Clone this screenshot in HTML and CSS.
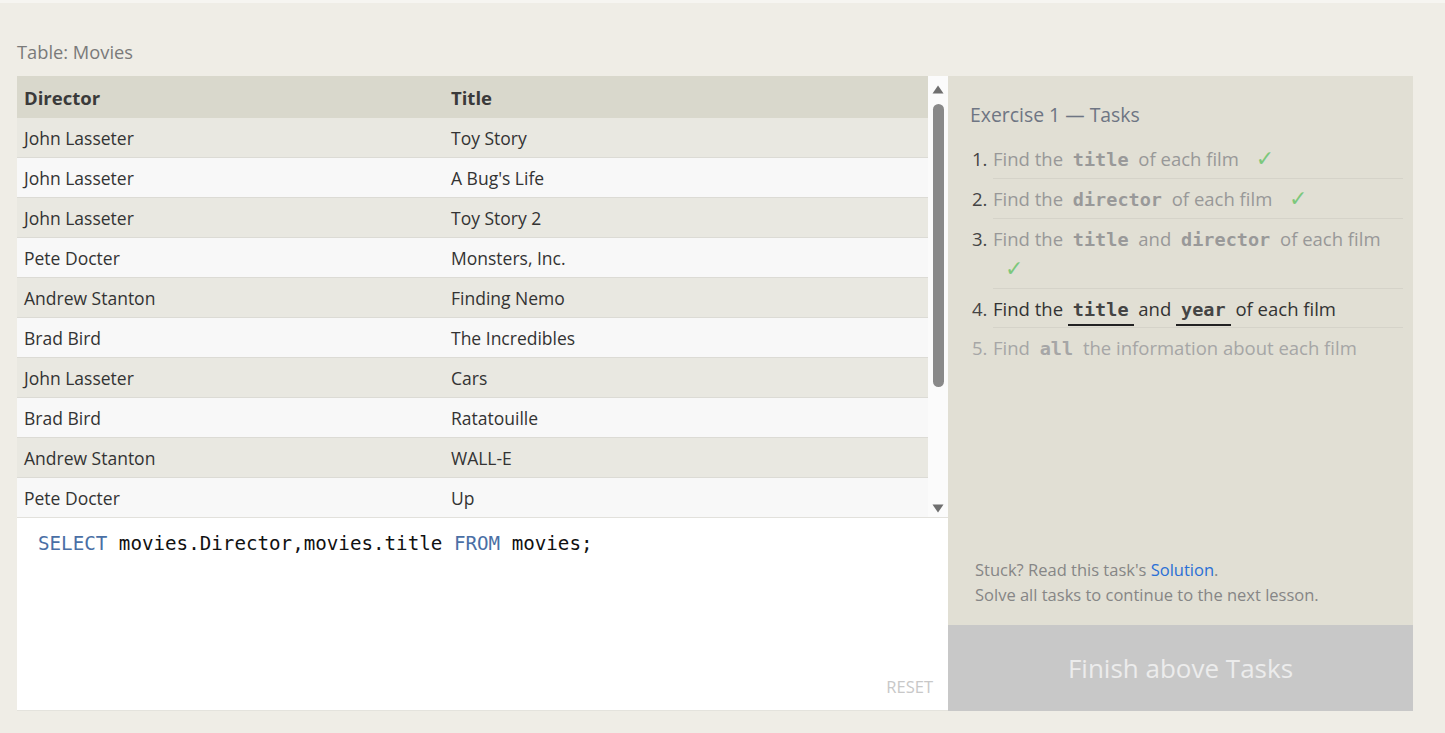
FILE: index.html
```html
<!DOCTYPE html>
<html>
<head>
<meta charset="utf-8">
<link rel="stylesheet" href="styles.css">
</head>
<body>
<div class="topstrip"></div>
<div class="page">
  <div class="table-label">Table: Movies</div>
  <div class="workspace">
    <div class="left">
      <div class="table-area">
        <div class="table">
          <div class="row head"><div class="c1">Director</div><div class="c2">Title</div></div>
          <div class="row odd"><div class="c1">John Lasseter</div><div class="c2">Toy Story</div></div>
          <div class="row even"><div class="c1">John Lasseter</div><div class="c2">A Bug's Life</div></div>
          <div class="row odd"><div class="c1">John Lasseter</div><div class="c2">Toy Story 2</div></div>
          <div class="row even"><div class="c1">Pete Docter</div><div class="c2">Monsters, Inc.</div></div>
          <div class="row odd"><div class="c1">Andrew Stanton</div><div class="c2">Finding Nemo</div></div>
          <div class="row even"><div class="c1">Brad Bird</div><div class="c2">The Incredibles</div></div>
          <div class="row odd"><div class="c1">John Lasseter</div><div class="c2">Cars</div></div>
          <div class="row even"><div class="c1">Brad Bird</div><div class="c2">Ratatouille</div></div>
          <div class="row odd"><div class="c1">Andrew Stanton</div><div class="c2">WALL-E</div></div>
          <div class="row even"><div class="c1">Pete Docter</div><div class="c2">Up</div></div>
        </div>
        <div class="scrollbar">
          <svg class="arrow" width="12" height="10" viewBox="0 0 12 10"><path d="M0.5 9.5 L6 1.5 L11.5 9.5 Z" fill="#6f6f6f"/></svg>
          <div class="thumb-track"><div class="thumb"></div></div>
          <svg class="arrow" width="12" height="10" viewBox="0 0 12 10"><path d="M0.5 1.5 L6 9.5 L11.5 1.5 Z" fill="#6f6f6f"/></svg>
        </div>
      </div>
      <div class="editor">
        <div class="code"><span class="kw">SELECT</span> movies.Director,movies.title <span class="kw">FROM</span> movies;</div>
        <div class="reset">RESET</div>
      </div>
    </div>
    <div class="right">
      <div class="tasks">
        <div class="tasks-title">Exercise 1 — Tasks</div>
        <ol class="task-list">
          <li class="done"><span class="num">1.</span><span class="txt">Find the <code>title</code> of each film <span class="check">✓</span></span></li>
          <li class="done"><span class="num">2.</span><span class="txt">Find the <code>director</code> of each film <span class="check">✓</span></span></li>
          <li class="done"><span class="num">3.</span><span class="txt">Find the <code>title</code> and <code>director</code> of each film <span class="check">✓</span></span></li>
          <li class="active"><span class="num">4.</span><span class="txt">Find the <code>title</code> and <code>year</code> of each film</span></li>
          <li class="todo"><span class="num">5.</span><span class="txt">Find <code>all</code> the information about each film</span></li>
        </ol>
        <div class="stuck">
          <div>Stuck? Read this task's <a href="#">Solution</a>.</div>
          <div>Solve all tasks to continue to the next lesson.</div>
        </div>
      </div>
      <div class="finish">Finish above Tasks</div>
    </div>
  </div>
</div>
</body>
</html>
```

FILE: styles.css
```css
* { box-sizing: border-box; }
html, body { margin: 0; padding: 0; }
body {
  background: #efede6;
  font-family: "Open Sans", "Noto Sans", sans-serif;
  width: 1445px;
  height: 733px;
  overflow: hidden;
}
.topstrip { height: 3px; background: #f6f5f1; }
.page { padding: 37px 0 0 17px; }
.table-label {
  font-size: 18.3px;
  line-height: 24px;
  color: #7a7a7a;
  height: 36px;
}
.workspace { display: flex; width: 1396px; height: 635px; }
.left { width: 931px; display: flex; flex-direction: column; background: #fff; border-bottom: 1px solid #e4e3dd; }
.table-area { height: 441px; display: flex; overflow: hidden; }
.table { width: 911px; }
.row { display: flex; height: 40px; border-bottom: 1px solid #dcdbd5; align-items: center; font-size: 17.5px; color: #333; }
.row.head { height: 42px; background: #d9d8cc; font-weight: 700; font-size: 18.5px; border-bottom: none; color: #3a3a3a; }
.row.odd { background: #e9e8e1; }
.row.even { background: #f8f8f8; }
.c1 { width: 427px; padding-left: 7px; }
.c2 { flex: 1; padding-left: 7px; }
.scrollbar { width: 20px; background: #fbfbfb; display: flex; flex-direction: column; align-items: center; padding: 8px 0 4px; }
.arrow { display: block; }
.thumb-track { flex: 1; padding: 10px 0; width: 100%; display: flex; justify-content: center; }
.thumb { width: 11px; height: 283px; background: #898989; border-radius: 6px; }
.editor {
  flex: 1;
  border-top: 1px solid #e2e1dc;
  display: flex;
  flex-direction: column;
  justify-content: space-between;
  padding: 13px 15px 12px 21px;
  background: #fff;
}
.code { font-family: "DejaVu Sans Mono", monospace; font-size: 19.2px; color: #111; line-height: 26px; }
.kw { color: #4a6fa5; }
.reset { align-self: flex-end; font-size: 16.5px; color: #c8c8c8; }
.right { width: 465px; display: flex; flex-direction: column; background: #e1dfd4; }
.tasks { flex: 1; padding: 26px 10px 0 22px; display: flex; flex-direction: column; }
.tasks-title { font-size: 19.4px; color: #6e7583; line-height: 26px; margin-bottom: 11px; }
.task-list { list-style: none; margin: 0; padding: 0 0 0 2px; }
.task-list li { display: flex; font-size: 18.5px; line-height: 30px; }
.task-list .num { width: 21px; flex: none; color: #444; padding-top: 5px; }
.task-list .txt { flex: 1; border-bottom: 1px solid #d5d3c9; padding: 5px 0 4px; }
.task-list li:last-child .txt { border-bottom: none; }
.task-list code { font-family: "DejaVu Sans Mono", monospace; font-weight: 700; font-size: 18.5px; padding: 0 5px; line-height: 1; }
.done .txt { color: #989898; }
.done code { color: #999; }
.check { color: #7cc87c; margin-left: 12px; font-family: "DejaVu Sans", sans-serif; font-size: 22px; line-height: 1; }
.task-list .active .txt { color: #333; padding-bottom: 3px; }
.active code { color: #444; border-bottom: 2px solid #222; padding: 0 5px 4px; }
.todo .txt, .todo .num { color: #a6a6a6; }
.todo code { color: #a6a6a6; }
.stuck { margin-top: auto; padding: 0 0 18px 5px; font-size: 16.5px; color: #868686; line-height: 25px; }
.stuck a { color: #2a6fd6; text-decoration: none; }
.finish {
  height: 86px;
  background: #c8c8c8;
  color: #ececec;
  font-size: 26px;
  display: flex;
  align-items: center;
  justify-content: center;
}
```
